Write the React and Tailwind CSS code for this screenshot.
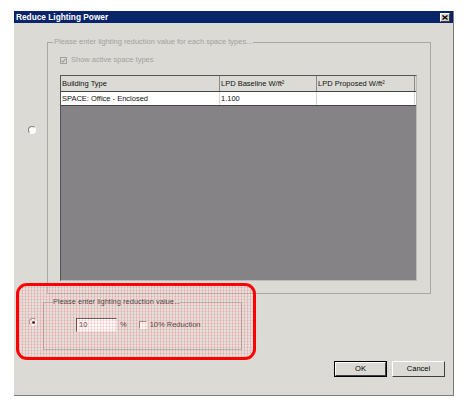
import React, { useState } from "react";

// classic raised / sunken bevels
const raised = "border border-t-white border-l-white border-r-[#404040] border-b-[#404040]";
const sunken = "border border-t-[#808080] border-l-[#808080] border-r-white border-b-white";

function Radio({ checked }) {
  return (
    <div className={`w-[8px] h-[8px] rounded-full bg-white flex items-center justify-center ${sunken}`}>
      {checked && <div className="w-[3px] h-[3px] rounded-full bg-black" />}
    </div>
  );
}

function CloseButton() {
  return (
    <div className={`w-[10px] h-[9px] bg-[#d4d0c8] flex items-center justify-center ${raised}`}>
      <svg width="6" height="5" viewBox="0 0 6 5">
        <path d="M0.5 0.5 L5.5 4.5 M5.5 0.5 L0.5 4.5" stroke="#000" strokeWidth="1.3" />
      </svg>
    </div>
  );
}

function Button({ label, isDefault }) {
  return (
    <div className={isDefault ? "border border-black" : ""}>
      <div
        className={`${isDefault ? "w-[51px] h-[14px]" : "w-[53px] h-[16px]"} flex items-center justify-center text-black ${raised}`}
      >
        {label}
      </div>
    </div>
  );
}

export default function App() {
  const [mode] = useState("percent");
  const rows = [{ id: 1, type: "SPACE: Office - Enclosed", baseline: "1.100", proposed: "" }];

  return (
    <div className="w-[468px] h-[405px] bg-white pt-[11px] pl-[14px] font-['Liberation_Sans',Arial,sans-serif] text-[7.5px] leading-[10px] text-[#111]">
      <div className="relative w-[440px] h-[385px] bg-[#dcdad5] border-r border-b border-r-[#7c7c7c] border-b-[#7c7c7c] flex flex-col">
        {/* title bar */}
        <div className="h-[12px] bg-[#0a246a] flex items-center justify-between pl-[2px] pr-[3px]">
          <span className="text-white font-bold text-[8.3px] leading-[12px]">Reduce Lighting Power</span>
          <CloseButton />
        </div>

        {/* per space type */}
        <div className="flex mt-[14px]">
          <div className="w-[33px] pl-[14px] pt-[89px]">
            <Radio checked={mode === "space"} />
          </div>
          <fieldset className="w-[384px] h-[257px] border border-[#a9a8a4]">
            <legend className="ml-[5px] px-[1px] text-[#a3a19d]">
              Please enter lighting reduction value for each space types...
            </legend>
            <div className="pl-[12px] pt-[9px]">
              <div className="flex items-center h-[8px] gap-[4px] text-[#a3a19d]">
                <div className="w-[7px] h-[7px] border border-[#a3a19d] bg-[#dcdad5] flex items-center justify-center">
                  <svg width="5" height="5" viewBox="0 0 5 5">
                    <path d="M0.5 2.5 L2 4 L4.5 0.8" stroke="#a3a19d" strokeWidth="1.2" fill="none" />
                  </svg>
                </div>
                <span>Show active space types</span>
              </div>
              <div className="mt-[11px] w-[357px] h-[206px] bg-[#858386] border border-t-[#555] border-l-[#555] border-r-[#bbb] border-b-[#bbb]">
                <div className="flex w-[355px] h-[16px] bg-[#dcdad5] border-b border-[#444]">
                  <div className="w-[159px] pl-[1px] flex items-center border-r border-[#8a8a8a]">Building Type</div>
                  <div className="w-[97px] pl-[1px] flex items-center border-r border-[#8a8a8a]">LPD Baseline W/ft²</div>
                  <div className="w-[98px] pl-[1px] flex items-center border-r border-[#8a8a8a]">LPD Proposed W/ft²</div>
                </div>
                {rows.map((row) => (
                  <div key={row.id} className="flex w-[355px] h-[14px] bg-white border-b border-[#444]">
                    <div className="w-[159px] pl-[1px] flex items-center border-r border-[#d6d6d6]">{row.type}</div>
                    <div className="w-[97px] pl-[1px] flex items-center border-r border-[#d6d6d6]">{row.baseline}</div>
                    <div className="w-[98px] pl-[1px] flex items-center border-r border-[#d6d6d6]">{row.proposed}</div>
                  </div>
                ))}
              </div>
            </div>
          </fieldset>
        </div>

        {/* single reduction value */}
        <div className="flex mt-[3px]">
          <div className="w-[29px] pl-[15px] pt-[21px]">
            <Radio checked={mode === "percent"} />
          </div>
          <fieldset className="w-[199px] h-[53px] border border-[#a9a8a4]">
            <legend className="ml-[9px]">Please enter lighting reduction value...</legend>
            <div className="flex items-center pl-[32px] pt-[11px]">
              <div className="w-[41px] h-[14px] bg-white pl-[2px] flex items-center border border-t-[#404040] border-l-[#404040] border-r-[#e8e8e8] border-b-[#e8e8e8]">
                10
              </div>
              <span className="ml-[3px]">%</span>
              <div className={`ml-[12px] w-[8px] h-[8px] bg-white ${sunken}`} />
              <span className="ml-[3px]">10% Reduction</span>
            </div>
          </fieldset>
        </div>

        <div className="flex justify-end gap-[5px] pr-[8px] mt-[11px]">
          <Button label="OK" isDefault />
          <Button label="Cancel" />
        </div>

        {/* highlight ring */}
        <div className="pointer-events-none absolute left-[2px] top-[272px] w-[240px] h-[77px] rounded-[11px] border-[3px] border-[#ff0000] bg-[repeating-linear-gradient(90deg,rgba(240,110,110,0.22)_0_1px,rgba(255,235,235,0.25)_1px_3px),repeating-linear-gradient(0deg,rgba(240,110,110,0.22)_0_1px,transparent_1px_3px)]" />
      </div>
    </div>
  );
}
